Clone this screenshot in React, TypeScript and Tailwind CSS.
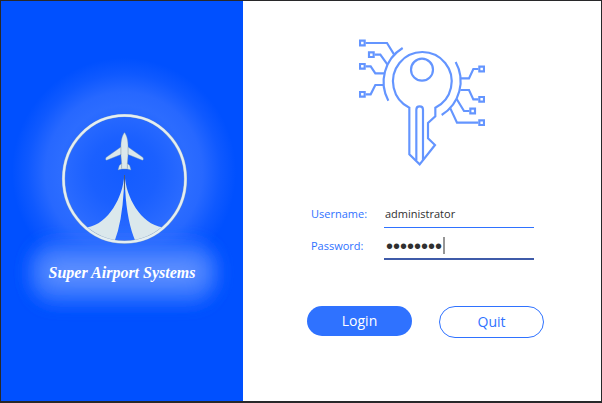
import { useState } from "react";

function Glow() {
  return (
    <svg
      className="absolute inset-0 h-full w-full"
      viewBox="1 1 242 400"
      preserveAspectRatio="xMidYMid slice"
      aria-hidden="true"
    >
      <defs>
        <radialGradient id="halo">
          <stop offset="0" stopColor="#145cff" />
          <stop offset="0.3" stopColor="#1b60ff" />
          <stop offset="0.58" stopColor="#2c6cff" />
          <stop offset="0.7" stopColor="#2768ff" />
          <stop offset="0.86" stopColor="#0f59ff" />
          <stop offset="1" stopColor="#0050ff" />
        </radialGradient>
        <filter id="soft" x="-30%" y="-60%" width="160%" height="220%">
          <feGaussianBlur stdDeviation="8" />
        </filter>
        <filter id="softer" x="-30%" y="-150%" width="160%" height="400%">
          <feGaussianBlur stdDeviation="12" />
        </filter>
      </defs>
      <ellipse cx="124" cy="172" rx="112" ry="114" fill="url(#halo)" />
      <rect x="31" y="242" width="184" height="62" rx="24" fill="#2467ff" filter="url(#soft)" />
      <rect x="38" y="256" width="172" height="32" rx="16" fill="#6493ff" filter="url(#softer)" />
    </svg>
  );
}

function Emblem() {
  return (
    <svg className="relative h-[132px] w-[130px]" viewBox="57 113 130 132" aria-hidden="true">
      <g fill="#dbe8ec">
        <path d="M124.2 176C123 196 109 224 87 227.500Q99 238 114.500 241.500Q122 222 123.800 190Z" />
        <path d="M124.800 176C126 196 140 224 163 227.500Q150 238 135.500 241.500Q127 222 125.200 190Z" />
        <path
          d="M124.500 132.500C122 136 121 140 120.900 147L106 157.500Q104.800 159.500 106.500 160.300L120.900 154.500L121.600 163.500L119.300 165.500L118 170L121.800 169H127.200L131 170L129.700 165.500L127.400 163.500L128.100 154.500L142.500 160.300Q144.200 159.500 143 157.500L128.100 147C128 140 127 136 124.500 132.500Z"
          stroke="#6d8fae"
          strokeWidth="0.4"
        />
      </g>
      <path d="M120.900 147V155M128.100 147V155M121.600 163V168.500M127.400 163V168.500" stroke="#8095a8" strokeWidth="0.6" />
      <path d="M124.500 175V190" stroke="#4b5a78" strokeWidth="1" />
      <ellipse cx="124.500" cy="178.800" rx="61" ry="63.300" fill="none" stroke="#8ba6c4" strokeWidth="3.200" />
      <ellipse cx="124.500" cy="178.800" rx="61" ry="63.300" fill="none" stroke="#e4eef2" strokeWidth="2.400" />
    </svg>
  );
}

function KeyIcon() {
  return (
    <svg
      className="h-[127px] w-[126px] self-center"
      viewBox="27 28 378 381"
      fill="none"
      stroke="#6495ff"
      strokeWidth="6.500"
      aria-hidden="true"
    >
      <path d="M178 374V234A88 88 0 1 1 256 234V260L234 280V326L255 346L209 404Z" />
      <path d="M199 392V240Q199 230 209 230Q219 230 219 240V392" />
      <circle cx="216" cy="120" r="33" />
      <path d="M158 55A119 119 0 0 0 115 213" />
      <path d="M317 97A119 119 0 0 1 275 256" />
      <path d="M47 40H111L132 74M74 75H91L112 104M47 110H62L76 131H104M47 194H62L76 166H102" />
      <path d="M385 118H370L357 146H331M385 209H370L357 181H331M358 244H342L320 208M385 279H321L301 236" />
      <path d="M30 33H44V47H30ZM57 68H71V82H57ZM30 103H44V117H30ZM30 187H44V201H30ZM388 111H402V125H388ZM388 202H402V216H388ZM361 237H375V251H361ZM388 272H402V286H388Z" />
    </svg>
  );
}

export default function App() {
  const [username, setUsername] = useState("administrator");
  const [password, setPassword] = useState("password");

  return (
    <div className="flex min-h-screen border border-b-2 border-[#28282a] bg-white font-['Open_Sans',sans-serif]">
      <aside className="relative flex w-[242px] shrink-0 flex-col items-center overflow-hidden bg-[#0050ff] pt-28">
        <Glow />
        <Emblem />
        <p className="relative mt-4 font-['Liberation_Serif',serif] text-base font-bold leading-6 text-white italic">
          Super Airport Systems
        </p>
      </aside>

      <main className="flex flex-1 flex-col pt-[38px]">
        <KeyIcon />
        <form className="mt-[38px] ml-16 w-[237px]" onSubmit={(e) => e.preventDefault()}>
          <div className="flex">
            <label htmlFor="username" className="w-[77px] pl-1 text-[11px] leading-5 text-[#2f72ff]">
              Username:
            </label>
            <input
              id="username"
              type="text"
              value={username}
              onChange={(e) => setUsername(e.target.value)}
              className="h-6 w-[150px] border-b border-[#2f72ff] px-px pb-1 text-[11px] text-[#303030] outline-none"
            />
          </div>
          <div className="mt-2 flex">
            <label htmlFor="password" className="w-[77px] pl-1 text-[11px] leading-5 text-[#2f72ff]">
              Password:
            </label>
            <div className="relative flex">
              <input
                id="password"
                type="password"
                value={password}
                onChange={(e) => setPassword(e.target.value)}
                className="h-6 w-[150px] border-b-2 border-[#3f5ba9] px-0.5 pb-0.5 font-['Liberation_Sans',sans-serif] text-xl text-[#303030] outline-none"
              />
              <span className="absolute top-px left-[59px] h-[17px] w-0.5 bg-[#969696]" />
            </div>
          </div>
          <div className="mt-[46px] flex items-start justify-between">
            <button type="submit" className="h-[30px] w-[105px] rounded-full bg-[#2f72ff] text-sm text-white">
              Login
            </button>
            <button
              type="button"
              className="h-8 w-[105px] rounded-full border border-[#2f72ff] bg-white text-sm text-[#2f72ff]"
            >
              Quit
            </button>
          </div>
        </form>
      </main>
    </div>
  );
}
